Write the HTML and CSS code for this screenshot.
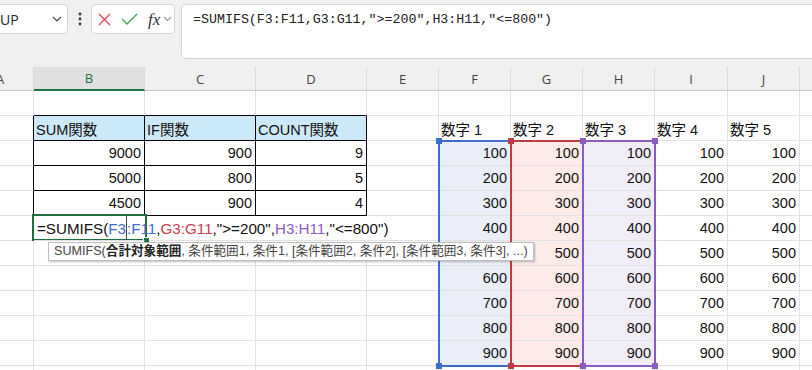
FILE: index.html
```html
<!DOCTYPE html>
<html lang="ja">
<head>
    <meta charset="UTF-8">
    <title>SUMIFS</title>
    <link rel="stylesheet" href="styles.css">
</head>
<body>
    <div class="toolbar">
        <div class="namebox">
            <span>UP</span>
            <svg width="10" height="6" viewBox="0 0 10 6"><path d="M1 1L5 5L9 1" fill="none" stroke="#444" stroke-width="1.2"/></svg>
        </div>
        <div class="dots">
            <svg width="4" height="14" viewBox="0 0 4 14"><circle cx="2" cy="2" r="1.4" fill="#333"/><circle cx="2" cy="7" r="1.4" fill="#333"/><circle cx="2" cy="12" r="1.4" fill="#333"/></svg>
        </div>
        <div class="fxbox">
            <svg class="cancel" width="13" height="13" viewBox="0 0 13 13"><path d="M1 1L12 12M12 1L1 12" fill="none" stroke="#e5484d" stroke-width="1.3"/></svg>
            <svg class="enter" width="17" height="12" viewBox="0 0 17 12"><path d="M1 6L6 11L16 1" fill="none" stroke="#3fa34d" stroke-width="1.3"/></svg>
            <span class="fx">fx</span>
            <svg width="9" height="6" viewBox="0 0 9 6"><path d="M1 1L4.5 4.5L8 1" fill="none" stroke="#999" stroke-width="1.1"/></svg>
        </div>
        <div class="formula">=SUMIFS(F3:F11,G3:G11,"&gt;=200",H3:H11,"&lt;=800")</div>
    </div>

    <div class="sheet">
        <!-- 列見出し -->
        <div class="ch ca">A</div><div class="ch sel">B</div><div class="ch">C</div><div class="ch">D</div><div class="ch">E</div><div class="ch">F</div><div class="ch">G</div><div class="ch">H</div><div class="ch">I</div><div class="ch">J</div><div class="ch"></div>

        <!-- 1 -->
        <div class="c"></div><div class="c tt"></div><div class="c tt"></div><div class="c tt"></div><div class="c"></div><div class="c"></div><div class="c"></div><div class="c"></div><div class="c"></div><div class="c"></div><div class="c"></div>
        <!-- 2 -->
        <div class="c tl"></div><div class="c t th">SUM関数</div><div class="c t th">IF関数</div><div class="c t th">COUNT関数</div><div class="c"></div><div class="c">数字 1</div><div class="c">数字 2</div><div class="c">数字 3</div><div class="c">数字 4</div><div class="c">数字 5</div><div class="c"></div>
        <!-- 3 -->
        <div class="c tl"></div><div class="c t n">9000</div><div class="c t n">900</div><div class="c t n">9</div><div class="c"></div><div class="c n fb">100</div><div class="c n fr">100</div><div class="c n fp">100</div><div class="c n">100</div><div class="c n">100</div><div class="c"></div>
        <!-- 4 -->
        <div class="c tl"></div><div class="c t n">5000</div><div class="c t n">800</div><div class="c t n">5</div><div class="c"></div><div class="c n fb">200</div><div class="c n fr">200</div><div class="c n fp">200</div><div class="c n">200</div><div class="c n">200</div><div class="c"></div>
        <!-- 5 -->
        <div class="c tl"></div><div class="c t n">4500</div><div class="c t n">900</div><div class="c t n">4</div><div class="c"></div><div class="c n fb">300</div><div class="c n fr">300</div><div class="c n fp">300</div><div class="c n">300</div><div class="c n">300</div><div class="c"></div>
        <!-- 6 -->
        <div class="c"></div><div class="c nr edit">=SUMIFS(<span class="rb">F3</span><span class="caret"></span><span class="rb">:F11</span>,<span class="rr">G3:G11</span>,"&gt;=200",<span class="rp">H3:H11</span>,"&lt;=800")</div><div class="c nr"></div><div class="c nr"></div><div class="c"></div><div class="c n fb">400</div><div class="c n fr">400</div><div class="c n fp">400</div><div class="c n">400</div><div class="c n">400</div><div class="c"></div>
        <!-- 7 -->
        <div class="c"></div><div class="c"></div><div class="c"></div><div class="c"></div><div class="c"></div><div class="c n fb">500</div><div class="c n fr">500</div><div class="c n fp">500</div><div class="c n">500</div><div class="c n">500</div><div class="c"></div>
        <!-- 8 -->
        <div class="c"></div><div class="c"></div><div class="c"></div><div class="c"></div><div class="c"></div><div class="c n fb">600</div><div class="c n fr">600</div><div class="c n fp">600</div><div class="c n">600</div><div class="c n">600</div><div class="c"></div>
        <!-- 9 -->
        <div class="c"></div><div class="c"></div><div class="c"></div><div class="c"></div><div class="c"></div><div class="c n fb">700</div><div class="c n fr">700</div><div class="c n fp">700</div><div class="c n">700</div><div class="c n">700</div><div class="c"></div>
        <!-- 10 -->
        <div class="c"></div><div class="c"></div><div class="c"></div><div class="c"></div><div class="c"></div><div class="c n fb">800</div><div class="c n fr">800</div><div class="c n fp">800</div><div class="c n">800</div><div class="c n">800</div><div class="c"></div>
        <!-- 11 -->
        <div class="c"></div><div class="c"></div><div class="c"></div><div class="c"></div><div class="c"></div><div class="c n fb">900</div><div class="c n fr">900</div><div class="c n fp">900</div><div class="c n">900</div><div class="c n">900</div><div class="c"></div>
        <!-- 12 -->
        <div class="c"></div><div class="c"></div><div class="c"></div><div class="c"></div><div class="c"></div><div class="c"></div><div class="c"></div><div class="c"></div><div class="c"></div><div class="c"></div><div class="c"></div>

        <!-- 参照範囲の枠 -->
        <div class="range blue"><i class="k tl1"></i><i class="k bl1"></i></div>
        <div class="range red"><i class="k tl1"></i><i class="k bl1"></i></div>
        <div class="range purple"><i class="k tl1"></i><i class="k bl1"></i><i class="k tr1"></i><i class="k br1"></i></div>

        <div class="active"><i class="handle"></i></div>
        <div class="tip">SUMIFS(<b>合計対象範囲</b>, 条件範囲1, 条件1, [条件範囲2, 条件2], [条件範囲3, 条件3], ...)</div>
    </div>
</body>
</html>
```

FILE: styles.css
```css
* {
    margin: 0;
    padding: 0;
    box-sizing: border-box;
}
body {
    width: 812px;
    height: 370px;
    overflow: hidden;
    background: #fff;
    font-family: "Liberation Sans", "Noto Sans CJK JP", sans-serif;
}


/* 数式バー */
.toolbar {
    display: flex;
    align-items: flex-start;
    height: 67px;
    padding-top: 4px;
    background: #f0f0f0;
}
.namebox {
    display: flex;
    align-items: center;
    justify-content: space-between;
    width: 75px;
    height: 30px;
    margin-left: -7px;
    padding: 0 5px 0 6px;
    background: #fff;
    border: 1px solid #d4d4d4;
    border-radius: 4px;
    font-family: "Open Sans", sans-serif;
    font-size: 14px;
    color: #222;
}
.dots {
    display: flex;
    align-items: center;
    justify-content: center;
    width: 23px;
    height: 30px;
}
.fxbox {
    display: flex;
    align-items: center;
    width: 84px;
    height: 30px;
    padding-left: 6px;
    background: #fff;
    border: 1px solid #d4d4d4;
    border-radius: 4px;
}
.fxbox .enter {
    margin-left: 10px;
}
.fx {
    margin-left: 10px;
    margin-right: 3px;
    font-family: "Liberation Serif", serif;
    font-style: italic;
    font-size: 17px;
    color: #333;
    line-height: 1;
}
.formula {
    flex: 1;
    height: 55px;
    margin-left: 6px;
    margin-right: -10px;
    padding: 7px 11px;
    background: #fff;
    border: 1px solid #d4d4d4;
    border-radius: 4px;
    font-family: "Liberation Mono", monospace;
    font-size: 13.3px;
    color: #222;
}


/* シート */
.sheet {
    position: relative;
    display: grid;
    grid-template-columns: 34px 111px 111px 111px 72px 72px 72px 72px 73px 72px 40px;
    grid-template-rows: 24px repeat(12, 25px);
    height: 303px;
    overflow: hidden;
}
.ch {
    display: flex;
    align-items: center;
    justify-content: center;
    background: #f0f0f0;
    border-right: 1px solid #d9d9d9;
    border-bottom: 1px solid #c6c6c6;
    font-family: "Open Sans", sans-serif;
    font-size: 13px;
    color: #444;
}
.ch.ca {
    justify-content: flex-start;
    text-indent: -4px;
    overflow: hidden;
}
.ch.sel {
    background: #e0e0e0;
    border-bottom: 2px solid #217346;
    color: #217346;
}
.c {
    display: flex;
    align-items: center;
    padding: 0 3px 0 2px;
    border-right: 1px solid #e1e1e1;
    border-bottom: 1px solid #e1e1e1;
    font-size: 14.5px;
    color: #111;
    white-space: nowrap;
}
.n {
    justify-content: flex-end;
}
.nr {
    border-right-color: transparent;
}

/* 表の罫線 */
.t {
    border-right-color: #000;
    border-bottom-color: #000;
}
.tl {
    border-right-color: #000;
}
.tt {
    border-bottom-color: #000;
}
.th {
    background: #cce9f9;
}

.fb {
    background: #e9eef8;
}
.fr {
    background: #fcebe8;
}
.fp {
    background: #f0ecf8;
}


/* 編集中のセル */
.edit {
    position: relative;
    z-index: 1;
    overflow: visible;
    font-size: 15.2px;
    padding-left: 3px;
}
.rb {
    color: #3b6fcb;
}
.rr {
    color: #c8404a;
}
.rp {
    color: #8b5cc6;
}
.caret {
    display: inline-block;
    width: 0;
    height: 24px;
    border-left: 1px solid #444;
}

.range {
    position: absolute;
    top: 73px;
    width: 74px;
    height: 227px;
    border: 2px solid;
}
.range.blue {
    left: 438px;
    border-color: #3b6fcb;
}
.range.red {
    left: 510px;
    border-color: #c33b42;
}
.range.purple {
    left: 582px;
    border-color: #8b5cc6;
}
.k {
    position: absolute;
    width: 6px;
    height: 6px;
}
.blue .k {
    background: #3b6fcb;
}
.red .k {
    background: #c33b42;
}
.purple .k {
    background: #8b5cc6;
}
.tl1 {
    left: -4px;
    top: -4px;
}
.bl1 {
    left: -4px;
    bottom: -4px;
}
.tr1 {
    right: -4px;
    top: -4px;
}
.br1 {
    right: -4px;
    bottom: -4px;
}

.active {
    position: absolute;
    left: 32px;
    top: 147px;
    width: 115px;
    height: 27px;
    border: 2px solid #1e6e42;
}
.handle {
    position: absolute;
    right: -5px;
    bottom: -5px;
    width: 7px;
    height: 7px;
    background: #1e6e42;
    border: 1px solid #fff;
}

.tip {
    position: absolute;
    left: 48px;
    top: 175px;
    z-index: 2;
    height: 19px;
    padding: 0 5px;
    background: #fff;
    border: 1px solid #bdbdbd;
    box-shadow: 1px 1px 2px rgba(0, 0, 0, 0.25);
    font-size: 12.6px;
    line-height: 17px;
    color: #444;
    white-space: nowrap;
}
.tip b {
    color: #222;
}
```
